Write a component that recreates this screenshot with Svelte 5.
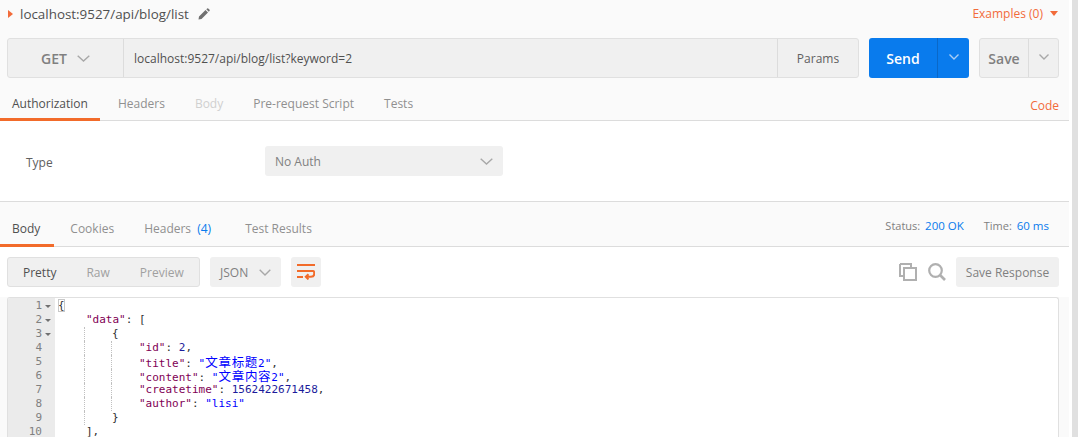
<script>
  const tabs = [
    { label: 'Authorization', cls: 'active' },
    { label: 'Headers', cls: '' },
    { label: 'Body', cls: 'disabled' },
    { label: 'Pre-request Script', cls: '' },
    { label: 'Tests', cls: '' }
  ];
</script>

<div class="page">
  <main>
    <header class="title">
      <div class="title-left">
        <span class="caret"></span>
        <span class="name">localhost:9527/api/blog/list</span>
        <svg class="pencil" viewBox="0 0 12 12" width="12" height="12"><path d="M0.5 11.5 L1 8.5 L7.5 2 L10 4.5 L3.5 11 Z M8.3 1.2 L9.2 0.4 Q9.7 0 10.2 0.4 L11.6 1.8 Q12 2.3 11.6 2.8 L10.8 3.7 Z" fill="#707070"/></svg>
      </div>
      <div class="examples">Examples (0) <span class="down"></span></div>
    </header>

    <section class="bar">
      <div class="url">
        <div class="method">
          <span>GET</span>
          <svg class="chev" viewBox="0 0 13 7" width="13" height="7"><path d="M0.7 0.7 L6.5 6 L12.3 0.7" /></svg>
        </div>
        <div class="address">localhost:9527/api/blog/list?keyword=2</div>
        <div class="params">Params</div>
      </div>
      <div class="send">
        <span class="send-l">Send</span>
        <span class="send-r"><svg class="chev light" viewBox="0 0 10 6" width="10" height="6"><path d="M0.5 0.5 L5 5 L9.5 0.5" /></svg></span>
      </div>
      <div class="save">
        <span class="save-l">Save</span>
        <span class="save-r"><svg class="chev" viewBox="0 0 10 6" width="10" height="6"><path d="M0.5 0.5 L5 5 L9.5 0.5" /></svg></span>
      </div>
    </section>

    <nav class="tabs req">
      {#each tabs as t}
        <span class="tab {t.cls}">{t.label}</span>
      {/each}
      <span class="code">Code</span>
    </nav>

    <section class="auth">
      <span class="type">Type</span>
      <div class="noauth">
        <span>No Auth</span>
        <svg class="chev" viewBox="0 0 13 7" width="13" height="7"><path d="M0.7 0.7 L6.5 6 L12.3 0.7" /></svg>
      </div>
    </section>

    <nav class="tabs res">
      <span class="tab active">Body</span>
      <span class="tab">Cookies</span>
      <span class="tab hdr">Headers <em>(4)</em></span>
      <span class="tab">Test Results</span>
      <div class="status">
        <span>Status: <b>200 OK</b></span>
        <span>Time: <b>60 ms</b></span>
      </div>
    </nav>

    <section class="tools">
      <div class="seg">
        <span class="on">Pretty</span>
        <span>Raw</span>
        <span>Preview</span>
      </div>
      <div class="json">
        <span>JSON</span>
        <svg class="chev" viewBox="0 0 12 7" width="12" height="7"><path d="M0.7 0.7 L6 6 L11.3 0.7" /></svg>
      </div>
      <div class="wrap">
        <svg viewBox="0 0 18 16" width="18" height="16"><path d="M0 1 H18 M0 7 H16 Q17.2 7 17.2 9 V10 Q17.2 12.8 14 12.8 H9 M0 13 H6 M11.5 10.2 L8.8 12.8 L11.5 15.4" fill="none" stroke="#f26b2a" stroke-width="2"/></svg>
      </div>
      <div class="spacer"></div>
      <svg class="copy" viewBox="0 0 18 18" width="18" height="18"><path d="M1 1 H12 V4 M4 13 H1 V1" fill="none" stroke="#b0b0b0" stroke-width="2"/><rect x="5" y="5" width="12" height="12" fill="none" stroke="#b0b0b0" stroke-width="2"/></svg>
      <svg class="search" viewBox="0 0 18 18" width="18" height="18"><circle cx="7.5" cy="7.5" r="6.3" fill="none" stroke="#b0b0b0" stroke-width="2.2"/><path d="M12 12 L17 17" stroke="#b0b0b0" stroke-width="2.6"/></svg>
      <div class="saveres">Save Response</div>
    </section>

    <section class="editor">
      <div class="gutter">
        {#each [1,2,3,4,5,6,7,8,9,10] as n}
          <div class="gl"><span>{n}</span><i class:fold={n <= 3}></i></div>
        {/each}
      </div>
      <div class="code-area">
        <div class="ln"><span class="match">&#123;</span></div>
        <div class="ln i1"><span class="k">"data"</span>: [</div>
        <div class="ln i2 g1">&#123;</div>
        <div class="ln i3 g1 g2"><span class="k">"id"</span>: <span class="n">2</span>,</div>
        <div class="ln i3 g1 g2"><span class="k">"title"</span>: <span class="s">"<span class="cjk">文章标题</span>2"</span>,</div>
        <div class="ln i3 g1 g2"><span class="k">"content"</span>: <span class="s">"<span class="cjk">文章内容</span>2"</span>,</div>
        <div class="ln i3 g1 g2"><span class="k">"createtime"</span>: <span class="n">1562422671458</span>,</div>
        <div class="ln i3 g1 g2"><span class="k">"author"</span>: <span class="s">"lisi"</span></div>
        <div class="ln i2 g1">&#125;</div>
        <div class="ln i1">],</div>
      </div>
    </section>
  </main>
  <aside class="scroll"></aside>
</div>

<style>
  :global(body) { margin: 0; background: #fff; }
  .page {
    display: flex;
    height: 437px;
    overflow: hidden;
    font-family: "Open Sans", sans-serif;
    font-size: 12px;
    color: #808080;
    background: #fff;
  }
  main { width: 1069px; flex: none; background: #fafafa; display: flex; flex-direction: column; }
  .scroll { margin-left: 3px; width: 6px; background: #e0e0e0; }

  .title { height: 38px; display: flex; justify-content: space-between; padding: 0 11px 0 8px; box-sizing: border-box; }
  .title-left { display: flex; align-items: center; height: 27px; }
  .caret { width: 0; height: 0; border-left: 5px solid #f26b3a; border-top: 4px solid transparent; border-bottom: 4px solid transparent; margin-right: 7px; }
  .name { font-size: 13.4px; color: #505050; }
  .pencil { margin-left: 9px; }
  .examples { color: #f26b3a; height: 27px; display: flex; align-items: center; gap: 6px; }
  .down { width: 0; height: 0; border-top: 5px solid #f26b3a; border-left: 4px solid transparent; border-right: 4px solid transparent; margin-left: 1px; }

  .bar { display: flex; height: 40px; padding-left: 7px; }
  .url { width: 852px; display: flex; box-sizing: border-box; border: 1px solid #e0e0e0; border-radius: 3px; background: #f0f0f0; }
  .method { width: 116px; flex: none; box-sizing: border-box; border-right: 1px solid #dcdcdc; display: flex; align-items: center; justify-content: center; gap: 10px; font-size: 14px; font-weight: 600; color: #808080; }
  .chev { fill: none; stroke: #a8a8a8; stroke-width: 1.4; }
  .chev.light { stroke: #a9cdf5; }
  .address { flex: 1; padding-left: 10px; display: flex; align-items: center; color: #505050; }
  .params { width: 81px; flex: none; box-sizing: border-box; border-left: 1px solid #dcdcdc; display: flex; align-items: center; justify-content: center; color: #606060; }
  .send { margin-left: 10px; width: 100px; display: flex; background: #097bed; border-radius: 3px; color: #fff; font-size: 14px; font-weight: 600; }
  .send-l { width: 69px; display: flex; align-items: center; justify-content: center; box-sizing: border-box; border-right: 1px solid #0a68c8; }
  .send-r { flex: 1; display: flex; align-items: center; justify-content: center; padding-bottom: 3px; }
  .save { margin-left: 10px; width: 80px; display: flex; box-sizing: border-box; background: #f0f0f0; border: 1px solid #e0e0e0; border-radius: 3px; color: #808080; font-size: 14px; font-weight: 600; }
  .save-l { width: 49px; display: flex; align-items: center; justify-content: center; box-sizing: border-box; border-right: 1px solid #dcdcdc; }
  .save-r { flex: 1; display: flex; align-items: center; justify-content: center; padding-bottom: 3px; }

  .tabs { display: flex; box-sizing: border-box; border-bottom: 1px solid #dcdcdc; align-items: stretch; }
  .req { height: 43px; padding-top: 10px; }
  .res { height: 45px; padding-top: 11px; }
  .tab { padding: 0 12px; display: flex; align-items: center; color: #909090; border-bottom: 3px solid transparent; margin-bottom: -1px; white-space: pre; }
  .req .tab { margin-right: 6px; }
  .res .tab { padding-right: 14px; margin-right: 4px; }
  .res .tab.hdr { margin-right: 8px; }
  .tab.active { color: #505050; border-bottom-color: #f26b2a; }
  .tab.disabled { color: #d0d0d0; }
  .tab em { font-style: normal; color: #097bed; margin-left: 3px; }
  .code { margin-left: auto; margin-right: 10px; color: #f26b3a; display: flex; align-items: center; padding-top: 2px; }
  .status { margin-left: auto; margin-right: 20px; display: flex; gap: 20px; align-items: center; color: #808080; font-size: 11px; padding-bottom: 9px; }
  .status b { font-weight: 400; color: #097bed; margin-left: 2px; font-size: 11.5px; }

  .auth { height: 81px; background: #fff; box-sizing: border-box; border-bottom: 1px solid #dcdcdc; display: flex; align-items: center; padding: 0 0 0 26px; }
  .type { width: 239px; color: #606060; margin-top: 2px; }
  .noauth { width: 238px; height: 30px; background: #f0f0f0; border-radius: 3px; display: flex; align-items: center; justify-content: space-between; padding: 0 10px; box-sizing: border-box; color: #808080; }

  .tools { height: 50px; box-sizing: border-box; background: #fff; padding: 10px 10px 0 7px; display: flex; gap: 10px; align-items: flex-start; }
  .seg { width: 193px; height: 30px; box-sizing: border-box; background: #f0f0f0; border: 1px solid #e0e0e0; border-radius: 3px; display: flex; align-items: center; color: #a0a0a0; }
  .seg span { padding-left: 15px; padding-right: 15px; }
  .seg .on { color: #505050; }
  .json { width: 71px; height: 30px; box-sizing: border-box; background: #f0f0f0; border-radius: 3px; padding: 0 10px; display: flex; align-items: center; justify-content: space-between; }
  .wrap { width: 30px; height: 30px; background: #f0f0f0; border-radius: 3px; display: flex; align-items: center; justify-content: center; }
  .spacer { flex: 1; }
  .copy { margin-top: 6px; margin-right: 1px; }
  .search { margin-top: 6px; }
  .saveres { width: 103px; height: 30px; background: #f0f0f0; border-radius: 3px; display: flex; align-items: center; justify-content: center; color: #808080; }

  .editor { flex: 1; background: #fff; margin: 0 10px 0 7px; border: 1px solid #e0e0e0; border-bottom: 0; border-radius: 3px 3px 0 0; display: flex; overflow: hidden; font-family: "DejaVu Sans Mono", monospace; font-size: 11px; line-height: 14px; }
  .gutter { width: 47px; background: #ebebeb; flex: none; padding-top: 1px; color: #808080; }
  .gl { height: 14px; display: flex; justify-content: flex-end; align-items: center; padding-right: 4px; gap: 3px; }
  .gl i { width: 0; height: 0; border-left: 3px solid transparent; border-right: 3px solid transparent; border-top: 3px solid transparent; }
  .gl i.fold { border-top-color: #707070; }
  .code-area { flex: 1; padding: 1px 0 0 3px; color: #303030; }
  .ln { height: 14px; white-space: pre; position: relative; }
  .match { outline: 1px solid #c8c8c8; outline-offset: -1px; }
  .i1 { padding-left: 28px; }
  .i2 { padding-left: 54px; }
  .i3 { padding-left: 81px; }
  .g1::before { content: ""; position: absolute; left: 26px; top: 0; bottom: 0; border-left: 1px dotted #c0c0c0; }
  .g2::after { content: ""; position: absolute; left: 53px; top: 0; bottom: 0; border-left: 1px dotted #c0c0c0; }
  .k { color: #7f0055; }
  .n { color: #1c1c9c; }
  .s { color: #0000ff; }
  .cjk { font-family: "Noto Sans CJK SC", sans-serif; font-size: 12.5px; letter-spacing: 0.7px; }
</style>
